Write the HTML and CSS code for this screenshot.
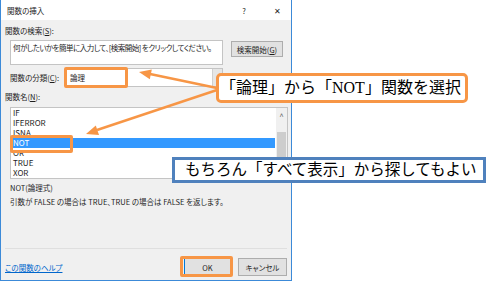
FILE: index.html
```html
<!DOCTYPE html>
<html lang="ja">

<head>
    <meta charset="UTF-8">
    <title>関数の挿入</title>
    <link rel="stylesheet" href="styles.css">
</head>

<body>

    <div class="dialog">
        <div class="titlebar">
            <span class="title">関数の挿入</span>
            <span class="help">?</span>
            <span class="close">✕</span>
        </div>

        <div class="content">
            <div class="label first">関数の検索(<u>S</u>):</div>
            <div class="search-row">
                <div class="search-box">何がしたいかを簡単に入力して、[検索開始] をクリックしてください。</div>
                <button class="btn search-btn">検索開始(<u>G</u>)</button>
            </div>

            <div class="category-row">
                <span class="label cat-label">関数の分類(<u>C</u>):</span>
                <div class="select">
                    <span class="select-value">論理</span>
                    <span class="select-arrow"></span>
                </div>
            </div>

            <div class="label names">関数名(<u>N</u>):</div>
            <div class="list">
                <ul class="items">
                    <li>IF</li>
                    <li>IFERROR</li>
                    <li>ISNA</li>
                    <li class="selected">NOT</li>
                    <li>OR</li>
                    <li>TRUE</li>
                    <li>XOR</li>
                </ul>
                <div class="scrollbar">
                    <span class="up">˄</span>
                    <span class="thumb"></span>
                </div>
            </div>

            <div class="syntax">NOT(論理式)</div>
            <div class="desc">引数が FALSE の場合は TRUE、TRUE の場合は FALSE を返します。</div>

            <div class="separator"></div>

            <div class="footer">
                <a class="help-link" href="#">この関数のヘルプ</a>
                <button class="btn ok">OK</button>
                <button class="btn cancel">キャンセル</button>
            </div>
        </div>
    </div>

    <!-- annotations -->
    <svg class="arrows" width="491" height="282" viewBox="0 0 491 282">
        <line x1="217" y1="88" x2="150" y2="74" />
        <polygon points="139,72 151.8,69.5 149.8,79.3" />
        <line x1="217" y1="90" x2="97" y2="130" />
        <polygon points="86,134 95.8,125.5 99,134.9" />
    </svg>

    <div class="mark mark-category"></div>
    <div class="mark mark-not"></div>
    <div class="mark mark-ok"></div>

    <div class="callout callout-orange">「論理」から「NOT」関数を選択</div>
    <div class="callout callout-blue">もちろん「すべて表示」から探してもよい</div>

</body>

</html>
```

FILE: styles.css
```css
* {
    margin: 0;
    padding: 0;
    box-sizing: border-box;
}

body {
    position: relative;
    width: 491px;
    height: 282px;
    overflow: hidden;
    background-color: #fff;
    font-family: "Noto Sans CJK JP", sans-serif;
    font-feature-settings: "palt";
    color: #1e1e1e;
}

.dialog {
    width: 292px;
    height: 281px;
    border: 1px solid #3c8ad8;
    border-top: none;
    background-color: #f0f0f0;
}

.titlebar {
    height: 20px;
    background-color: #fff;
    display: flex;
    align-items: center;
    font-size: 7.5px;
}

.title {
    padding-left: 6px;
}

.help {
    margin-left: auto;
    width: 8px;
    text-align: center;
}

.close {
    width: 10px;
    margin-left: 24px;
    margin-right: 9px;
    text-align: center;
    font-size: 8px;
}

.content {
    height: 260px;
    padding: 0 4px;
    display: flex;
    flex-direction: column;
    font-size: 7.5px;
}

.label {
    line-height: 10px;
    height: 10px;
}

.label.first {
    margin-top: 6px;
}

.search-row {
    margin-top: 4px;
    display: flex;
    align-items: flex-start;
}

.search-box {
    margin-left: 5px;
    width: 213px;
    height: 25px;
    padding: 2px 2px;
    line-height: 10px;
    letter-spacing: -0.5px;
    background-color: #fff;
    border: 1px solid #c4c4c4;
    white-space: nowrap;
    overflow: hidden;
}

.btn {
    font-family: "Noto Sans CJK JP", sans-serif;
    font-feature-settings: "palt";
    font-size: 7.5px;
    color: #1e1e1e;
    background-color: #e1e1e1;
    border: 1px solid #adadad;
}

.search-btn {
    margin-left: 8px;
    margin-top: 1px;
    width: 52px;
    height: 16px;
}

.category-row {
    margin-top: 3px;
    height: 19px;
    display: flex;
    align-items: center;
}

.cat-label {
    margin-left: 5px;
    width: 55px;
}

.select {
    width: 158px;
    height: 19px;
    display: flex;
    background-color: #fff;
    border: 1px solid #c4c4c4;
}

.select-value {
    flex: 1;
    padding-left: 4px;
    line-height: 17px;
}

.select-arrow {
    width: 10px;
    background-color: #e6e6e6;
    border-left: 1px solid #d0d0d0;
}

.names {
    margin-top: 5px;
}

.list {
    margin-top: 5px;
    margin-left: 5px;
    width: 278px;
    height: 72px;
    display: flex;
    background-color: #fff;
    border: 1px solid #c4c4c4;
}

.items {
    flex: 1;
    list-style: none;
    padding: 0 1px;
    font-size: 8px;
}

.items li {
    height: 10px;
    line-height: 10px;
    padding-left: 1px;
}

.items li.selected {
    background-color: #3399ff;
    color: #fff;
}

.scrollbar {
    width: 11px;
    display: flex;
    flex-direction: column;
    align-items: center;
    background-color: #f0f0f0;
}

.up {
    height: 14px;
    line-height: 14px;
    font-size: 7px;
    color: #606060;
}

.thumb {
    margin-top: 10px;
    width: 9px;
    height: 40px;
    background-color: #cdcdcd;
}

.syntax {
    margin-top: 4px;
    margin-left: 5px;
    line-height: 10px;
}

.desc {
    margin-top: 4px;
    margin-left: 5px;
    line-height: 10px;
    white-space: nowrap;
}

.separator {
    margin-top: 41px;
    height: 1px;
    background-color: #dfdfdf;
}

.footer {
    margin-top: 8px;
    height: 20px;
    display: flex;
    align-items: center;
}

.help-link {
    color: #0066cc;
    text-decoration: underline;
}

.ok {
    margin-left: auto;
    width: 47px;
    height: 18px;
    border-color: #0078d7;
}

.cancel {
    margin-left: 7px;
    width: 49px;
    height: 18px;
}

.arrows {
    position: absolute;
    left: 0;
    top: 0;
    pointer-events: none;
}

.arrows line {
    stroke: #f79646;
    stroke-width: 2.5;
}

.arrows polygon {
    fill: #f79646;
}

.mark {
    position: absolute;
    border: 3px solid #f79646;
    border-radius: 2px;
}

.mark-category {
    left: 64px;
    top: 67px;
    width: 64px;
    height: 21px;
}

.mark-not {
    left: 10px;
    top: 135px;
    width: 63px;
    height: 18px;
}

.mark-ok {
    left: 180px;
    top: 256px;
    width: 53px;
    height: 21px;
}

.callout {
    position: absolute;
    background-color: #fff;
    color: #000;
    white-space: nowrap;
    font-family: "Liberation Serif", "Noto Sans CJK JP", serif;
    font-feature-settings: normal;
}

.callout-orange {
    left: 216px;
    top: 73px;
    width: 252px;
    height: 30px;
    padding-left: 1px;
    border: 3px solid #f79646;
    border-radius: 5px;
    font-size: 16px;
    line-height: 24px;
}

.callout-blue {
    left: 172px;
    top: 157px;
    width: 314px;
    height: 26px;
    padding-left: 10px;
    border: 3px solid #4f81bd;
    font-size: 15.5px;
    line-height: 20px;
}
```
